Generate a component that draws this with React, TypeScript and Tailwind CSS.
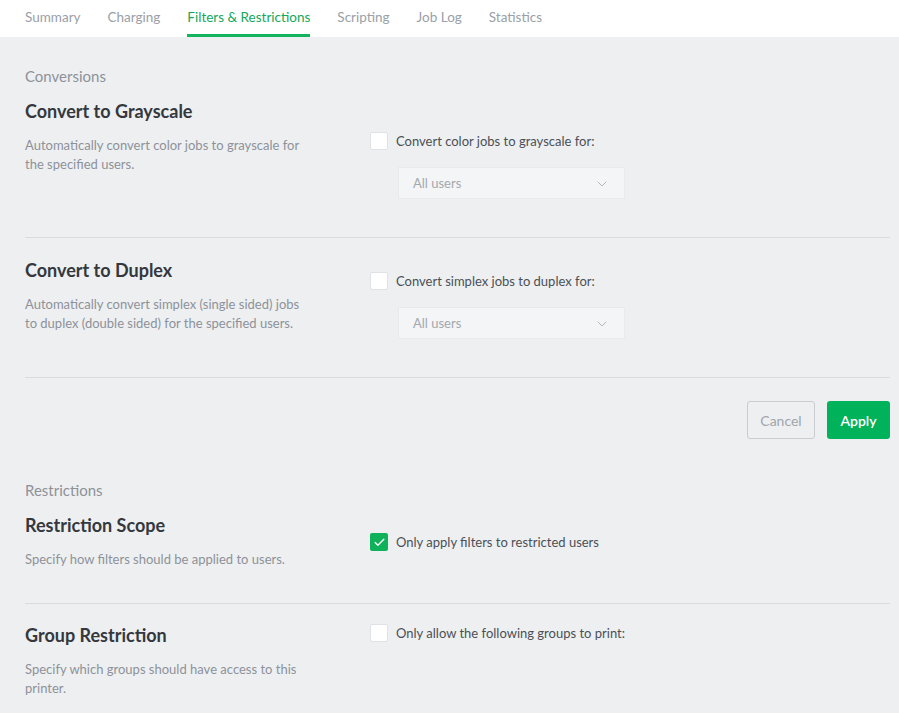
import React, { useState } from "react";
import { ChevronDown, Check } from "lucide-react";

const tabs = ["Summary", "Charging", "Filters & Restrictions", "Scripting", "Job Log", "Statistics"];

const Checkbox: React.FC<{ checked: boolean; onChange: () => void; label: string }> = ({ checked, onChange, label }) => (
  <label className="flex items-center gap-[8px] cursor-pointer select-none">
    <span
      onClick={onChange}
      className={
        checked
          ? "w-[18px] h-[18px] rounded-[2px] bg-[#0fb15b] flex items-center justify-center"
          : "w-[18px] h-[18px] rounded-[2px] bg-white border border-[#dfe2e6]"
      }
    >
      {checked && <Check size={13} strokeWidth={2.5} className="text-white" />}
    </span>
    <span className="text-[13px] text-[#4b5056] leading-[18px]">{label}</span>
  </label>
);

const UserSelect: React.FC = () => (
  <div className="ml-[28px] mt-[17px] w-[227px] h-[32px] bg-[#f4f5f7] border border-[#e9eaed] flex items-center justify-between pl-[14px] pr-[14px] pt-[1px]">
    <span className="text-[13px] text-[#a3a8ae]">All users</span>
    <ChevronDown size={16} strokeWidth={1.5} className="text-[#b4b8bd]" />
  </div>
);

const Row: React.FC<{
  title: string;
  desc: string;
  rightOffset: string;
  className: string;
  children: React.ReactNode;
}> = ({ title, desc, rightOffset, className, children }) => (
  <div className={"flex items-start " + className}>
    <div className="w-[345px] shrink-0">
      <h3 className="text-[18px] leading-[24px] font-bold text-[#34383d]">{title}</h3>
      <p className="mt-[13px] text-[13px] leading-[19px] text-[#8d9299] w-[284px]">{desc}</p>
    </div>
    <div className={rightOffset}>{children}</div>
  </div>
);

export default function App() {
  const [active, setActive] = useState(2);
  const [gray, setGray] = useState(false);
  const [duplex, setDuplex] = useState(false);
  const [scope, setScope] = useState(true);
  const [groups, setGroups] = useState(false);

  return (
    <div className="min-h-[713px] bg-[#eeeff1]" style={{ fontFamily: "Lato, 'Noto Sans', sans-serif" }}>
      <div className="bg-white h-[37px] flex items-end pl-[25px] gap-[27px]">
        {tabs.map((t, i) => (
          <button
            key={t}
            onClick={() => setActive(i)}
            className={
              i === active
                ? "h-[37px] text-[13.5px] text-[#14a85a] border-b-[3px] border-[#14b45e]"
                : "h-[37px] text-[13.5px] text-[#9aa0a7] border-b-[3px] border-transparent"
            }
          >
            {t}
          </button>
        ))}
      </div>

      <div className="pl-[25px] pr-[9px] pt-[29px]">
        <h2 className="text-[15px] leading-[20px] text-[#8d9299]">Conversions</h2>

        <Row
          title="Convert to Grayscale"
          desc="Automatically convert color jobs to grayscale for the specified users."
          rightOffset="pt-[33px]"
          className="mt-[13px] pb-[38px] border-b border-[#d9dcdf]"
        >
          <Checkbox checked={gray} onChange={() => setGray(!gray)} label="Convert color jobs to grayscale for:" />
          <UserSelect />
        </Row>

        <Row
          title="Convert to Duplex"
          desc="Automatically convert simplex (single sided) jobs to duplex (double sided) for the specified users."
          rightOffset="pt-[14px]"
          className="pt-[20px] pb-[38px] border-b border-[#d9dcdf]"
        >
          <Checkbox checked={duplex} onChange={() => setDuplex(!duplex)} label="Convert simplex jobs to duplex for:" />
          <UserSelect />
        </Row>

        <div className="flex justify-end gap-[12px] pt-[23px]">
          <button className="w-[68px] h-[38px] rounded-[3px] border border-[#c9cdd2] text-[14px] text-[#a0a5ab]">
            Cancel
          </button>
          <button className="w-[63px] h-[38px] rounded-[3px] bg-[#00b25a] text-[14px] font-semibold text-white">
            Apply
          </button>
        </div>

        <h2 className="mt-[41px] text-[15px] leading-[20px] text-[#8d9299]">Restrictions</h2>

        <Row
          title="Restriction Scope"
          desc="Specify how filters should be applied to users."
          rightOffset="pt-[20px]"
          className="mt-[13px] pb-[34px] border-b border-[#d9dcdf]"
        >
          <Checkbox checked={scope} onChange={() => setScope(!scope)} label="Only apply filters to restricted users" />
        </Row>

        <Row
          title="Group Restriction"
          desc="Specify which groups should have access to this printer."
          rightOffset="pt-[1px]"
          className="pt-[19px] pb-[20px]"
        >
          <Checkbox checked={groups} onChange={() => setGroups(!groups)} label="Only allow the following groups to print:" />
        </Row>
      </div>
    </div>
  );
}
